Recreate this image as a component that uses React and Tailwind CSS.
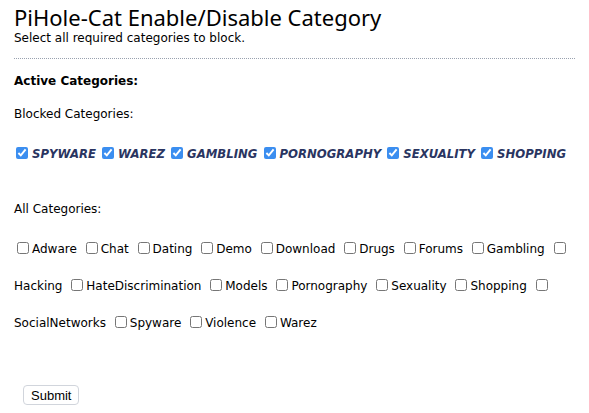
import React from "react";

const blocked = ["SPYWARE", "WAREZ", "GAMBLING", "PORNOGRAPHY", "SEXUALITY", "SHOPPING"];

const all = [
    "Adware", "Chat", "Dating", "Demo", "Download", "Drugs", "Forums", "Gambling",
    "Hacking", "HateDiscrimination", "Models", "Pornography", "Sexuality", "Shopping",
    "SocialNetworks", "Spyware", "Violence", "Warez"
];

const App = () => {
    return (
        <div className="px-[14px] pt-[3px] text-black text-[12px]" style={{ fontFamily: '"DejaVu Sans", sans-serif' }}>
            <h1 className="text-[22px] leading-[28px]" style={{ fontFamily: '"Noto Sans", sans-serif' }}>
                PiHole-Cat Enable/Disable Category
            </h1>
            <p className="text-[12px] leading-[14px]">Select all required categories to block.</p>

            {/* divider */}
            <div className="mt-[13px] border-t border-dotted border-gray-400"></div>

            <form>
                <p className="mt-[15px] font-bold leading-[15px]">Active Categories:</p>
                <p className="mt-[18px] leading-[15px]">Blocked Categories:</p>

                {/* currently blocked */}
                <div className="mt-[25px] leading-[15px] whitespace-nowrap italic font-bold text-[11.7px] text-[#2a3561]">
                    {blocked.map((cat) => (
                        <span key={cat}>
                            <input type="checkbox" defaultChecked className="w-[12px] h-[12px] ml-[2px] mr-[4px] align-[-1px] accent-[#3b8ef0]" />
                            {cat}{" "}
                        </span>
                    ))}
                </div>

                <p className="mt-[40px] leading-[15px]">All Categories:</p>

                <div className="mt-[14px] leading-[37px]">
                    {all.map((cat) => (
                        <React.Fragment key={cat}>
                            <input type="checkbox" className="w-[12px] h-[12px] ml-[3px] mr-[3px] align-[-1px]" />
                            <span className="pr-[2px]">{cat}</span>{" "}
                        </React.Fragment>
                    ))}
                </div>

                <button
                    type="button"
                    className="mt-[43px] ml-[9px] px-[7px] h-[20px] text-[13px] border border-gray-300 rounded-[4px] bg-white"
                    style={{ fontFamily: '"Liberation Sans", sans-serif' }}
                >
                    Submit
                </button>
            </form>
        </div>
    );
};

export default App;
